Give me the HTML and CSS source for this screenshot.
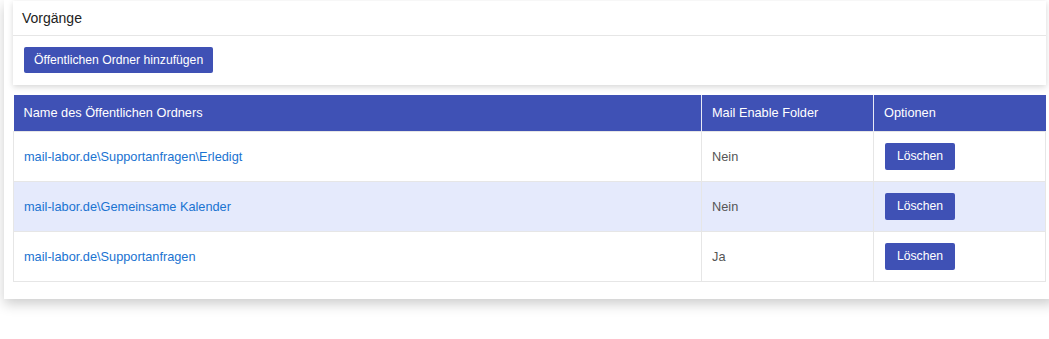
FILE: index.html
```html
<!DOCTYPE html>
<html lang="de">
<head>
  <meta charset="UTF-8">
  <title>Öffentliche Ordner</title>
  <link rel="stylesheet" href="styles.css">
</head>
<body>
  <div class="panel">
    <!-- Actions card -->
    <div class="card">
      <div class="card-header">Vorgänge</div>
      <div class="card-body">
        <button class="btn">Öffentlichen Ordner hinzufügen</button>
      </div>
    </div>

    <!-- Folder list -->
    <table class="folder-table">
      <thead>
        <tr>
          <th class="col-name">Name des Öffentlichen Ordners</th>
          <th class="col-mail">Mail Enable Folder</th>
          <th class="col-opt">Optionen</th>
        </tr>
      </thead>
      <tbody>
        <tr>
          <td><a href="#" class="folder-link">mail-labor.de\Supportanfragen\Erledigt</a></td>
          <td>Nein</td>
          <td><button class="btn btn-small">Löschen</button></td>
        </tr>
        <tr class="alt">
          <td><a href="#" class="folder-link">mail-labor.de\Gemeinsame Kalender</a></td>
          <td>Nein</td>
          <td><button class="btn btn-small">Löschen</button></td>
        </tr>
        <tr>
          <td><a href="#" class="folder-link">mail-labor.de\Supportanfragen</a></td>
          <td>Ja</td>
          <td><button class="btn btn-small">Löschen</button></td>
        </tr>
      </tbody>
    </table>
  </div>
</body>
</html>
```

FILE: styles.css
```css
* {
  margin: 0;
  padding: 0;
  box-sizing: border-box;
}

html {
  overflow: hidden;
}

body {
  font-family: "Liberation Sans", Arial, sans-serif;
  background: #ffffff;
  color: #333333;
  padding: 0 0 30px 4px;
}

.panel {
  width: 1051px;
  background: #ffffff;
  padding: 1px 9px 17px 9px;
  box-shadow: 0 5px 12px rgba(0, 0, 0, 0.2);
}

.card {
  background: #ffffff;
  box-shadow: 0 2px 6px rgba(0, 0, 0, 0.16);
  margin-bottom: 10px;
}

.card-header {
  height: 35px;
  padding: 0 9px;
  display: flex;
  align-items: center;
  font-size: 14px;
  color: #222222;
  border-bottom: 1px solid #e6e6e6;
}

.card-body {
  padding: 11px 11px 12px 11px;
}

.btn {
  background: #3f51b5;
  color: #ffffff;
  border: none;
  border-radius: 2px;
  font-family: inherit;
  font-size: 12.2px;
  height: 26px;
  padding: 0 10px;
  cursor: pointer;
}

.btn-small {
  width: 70px;
  height: 27px;
  padding: 0;
}

.folder-table {
  width: 1033px;
  border-collapse: collapse;
  font-size: 12.75px;
}

.folder-table th {
  background: #3f51b5;
  color: #ffffff;
  font-weight: normal;
  text-align: left;
  height: 36px;
  padding: 0 10px;
  border-left: 1px solid #e8eaf6;
}

.folder-table th:first-child {
  border-left: none;
}

.col-name {
  width: 688px;
}

.col-mail {
  width: 172px;
}

.folder-table td {
  height: 50px;
  padding: 0 10px;
  border: 1px solid #e6e6e6;
  color: #555555;
}

.folder-table tr.alt td {
  background: #e5eafc;
}

.folder-table td:last-child {
  padding-left: 11px;
}

.folder-link {
  color: #1a73d1;
  text-decoration: none;
}
```
